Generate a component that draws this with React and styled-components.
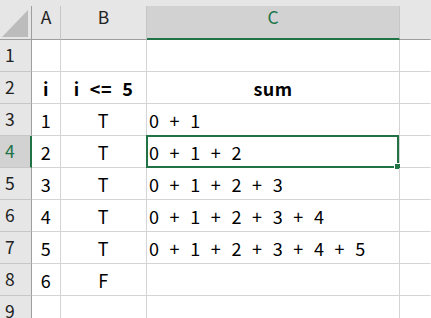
import React from "react";
import styled, { createGlobalStyle, css } from "styled-components";

const GREEN = "#217346";

const GlobalStyle = createGlobalStyle`
  html, body {
    margin: 0;
    padding: 0;
    background: #ffffff;
  }
  body {
    font-family: "Noto Sans CJK KR", "Noto Sans", sans-serif;
    overflow: hidden;
  }
`;

const Sheet = styled.div`
  width: 431px;
  height: 318px;
  overflow: hidden;
  background: #ffffff;
`;

const TopStrip = styled.div`
  height: 6px;
  background: #e6e6e6;
`;

const Grid = styled.div`
  display: grid;
  grid-template-columns: 32px 29px 86px 253px 31px;
  grid-template-rows: 34px repeat(9, 32px);
`;

const Corner = styled.div`
  box-sizing: border-box;
  background: #e6e6e6;
  border-right: 1px solid #9e9e9e;
  border-bottom: 1px solid #9e9e9e;
  padding: 4px 3px 2px 2px;
`;

const ColHead = styled.div`
  box-sizing: border-box;
  display: flex;
  justify-content: center;
  align-items: flex-end;
  padding-bottom: 12px;
  font-size: 17.5px;
  line-height: 20px;
  color: #222222;
  background: #e6e6e6;
  border-right: 1px solid ${(p) => (p.$last ? "transparent" : "#c6c6c6")};
  border-bottom: 1px solid #9e9e9e;

  ${(p) =>
    p.$active &&
    css`
      background: #d2d2d2;
      color: ${GREEN};
      padding-bottom: 11px;
      border-bottom: 2px solid ${GREEN};
    `}
`;

const RowHead = styled.div`
  box-sizing: border-box;
  display: flex;
  align-items: flex-end;
  padding: 0 0 6px 5px;
  font-size: 17.5px;
  line-height: 20px;
  color: #222222;
  background: #e6e6e6;
  border-right: 1px solid #9e9e9e;
  border-bottom: 1px solid #c6c6c6;

  ${(p) =>
    p.$active &&
    css`
      background: #d2d2d2;
      color: ${GREEN};
      border-right: 2px solid ${GREEN};
    `}
`;

const Cell = styled.div`
  box-sizing: border-box;
  position: relative;
  display: flex;
  align-items: flex-end;
  justify-content: ${(p) => (p.$align === "left" ? "flex-start" : "center")};
  padding: 0 0 5px ${(p) => (p.$align === "left" ? "2px" : "0")};
  font-size: 18px;
  line-height: 20px;
  letter-spacing: 0.5px;
  word-spacing: 5.6px;
  font-weight: ${(p) => (p.$bold ? 700 : 400)};
  color: #000000;
  white-space: pre;
  border-right: 1px solid ${(p) => (p.$last ? "transparent" : "#d4d4d4")};
  border-bottom: 1px solid #d4d4d4;
`;

const Selection = styled.div`
  position: absolute;
  top: -1px;
  left: -1px;
  right: 0;
  bottom: -1px;
  border: 2px solid ${GREEN};
  pointer-events: none;
`;

const FillHandle = styled.div`
  position: absolute;
  right: -4px;
  bottom: -4px;
  width: 5px;
  height: 5px;
  background: ${GREEN};
  border: 1px solid #ffffff;
`;

const rows = [
  ["", "", ""],
  ["i", "i <= 5", "sum"],
  ["1", "T", "0 + 1"],
  ["2", "T", "0 + 1 + 2"],
  ["3", "T", "0 + 1 + 2 + 3"],
  ["4", "T", "0 + 1 + 2 + 3 + 4"],
  ["5", "T", "0 + 1 + 2 + 3 + 4 + 5"],
  ["6", "F", ""],
  ["", "", ""],
];

const CornerMark = () => (
  <svg width="27" height="27" viewBox="0 0 27 27">
    <polygon points="26,0 26,27 0,27" fill="#bcbcbc" />
  </svg>
);

export default function App() {
  return (
    <Sheet>
      <GlobalStyle />
      <TopStrip />
      <Grid>
        <Corner>
          <CornerMark />
        </Corner>
        <ColHead>A</ColHead>
        <ColHead>B</ColHead>
        <ColHead $active>C</ColHead>
        <ColHead $last />

        {rows.map((r, i) => {
          const header = i === 1;
          const active = i === 3;
          return (
            <React.Fragment key={i}>
              <RowHead $active={active}>{i + 1}</RowHead>
              <Cell $bold={header}>{r[0]}</Cell>
              <Cell $bold={header}>{r[1]}</Cell>
              <Cell $bold={header} $align={header ? "center" : "left"}>
                {r[2]}
                {active && (
                  <Selection>
                    <FillHandle />
                  </Selection>
                )}
              </Cell>
              <Cell $last />
            </React.Fragment>
          );
        })}
      </Grid>
    </Sheet>
  );
}
